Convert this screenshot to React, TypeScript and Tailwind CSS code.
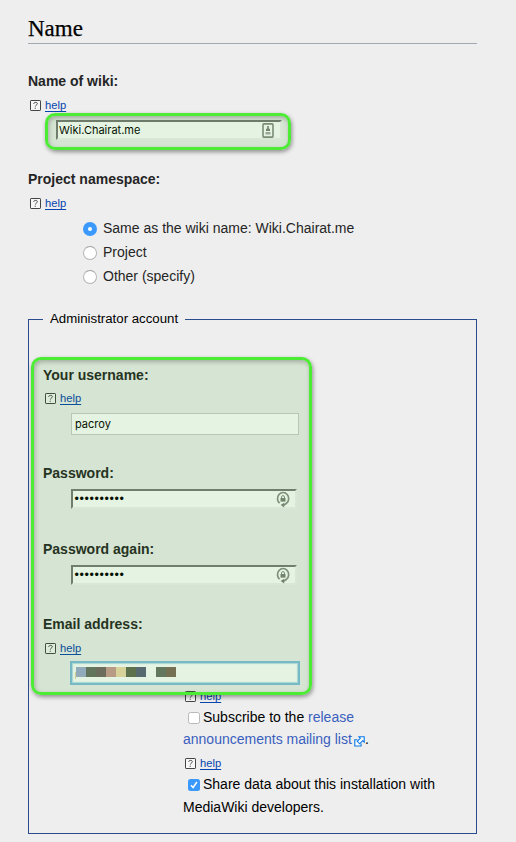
import type { ReactNode } from 'react';

function Help({ className }: { className: string }) {
  return (
    <div className={`flex h-4 items-center ${className}`}>
      <svg className="mr-[4px] shrink-0" width="11" height="11" viewBox="0 0 11 11" fill="none">
        <rect x="0.5" y="0.5" width="10" height="10" rx="0.6" fill="#f8f8f8" stroke="#444" />
        <path d="M3.7 3.9C3.8 2.7 4.8 2.4 5.7 2.4C6.8 2.4 7.5 3 7.3 3.9C7.1 5 5.6 5 5.4 6.5M5.2 7.7V8.8" stroke="#444" strokeWidth="1" />
      </svg>
      <a className="text-[11.2px] leading-4 text-[#0645ad] underline underline-offset-[2px]">help</a>
    </div>
  );
}

function Label({ children, className }: { children: ReactNode; className: string }) {
  return <div className={`h-5 text-[14px] font-bold leading-5 text-[#252525] ${className}`}>{children}</div>;
}

function Radio({ label, checked = false }: { label: string; checked?: boolean }) {
  return (
    <label className="flex h-6 items-center">
      <span
        className={`mr-[6px] mt-[2px] flex size-[14px] items-center justify-center rounded-full ${
          checked ? 'bg-[#3b99fc]' : 'border border-[#b5b5b5] border-t-[#a0a0a0] bg-white'
        }`}
      >
        {checked && <span className="size-1 rounded-full bg-white" />}
      </span>
      <span className="leading-6">{label}</span>
    </label>
  );
}

function KeyIcon() {
  return (
    <svg className="mr-[5px] shrink-0" width="14" height="17" viewBox="0 0 14 17" fill="none">
      <path d="M3.6 12.2A5.6 6 0 1 1 10.6 12.2L7.5 14.2" stroke="#8a8f88" strokeWidth="1.7" />
      <path d="M8.2 11.8L4.6 14.1L8.2 16.6Z" fill="#7c827a" />
      <rect x="4.5" y="7" width="5" height="3.6" fill="#7c827a" />
      <path d="M5.5 7V6C5.5 4.1 8.5 4.1 8.5 6V7" stroke="#8a8f88" />
    </svg>
  );
}

function Password() {
  return (
    <div className="ml-[42px] mt-1.5 flex h-[20px] w-[226px] items-center justify-between border-2 border-b-[#f2f2f2] border-l-[#7a7a7a] border-r-[#f2f2f2] border-t-[#7a7a7a] bg-white">
      <span className="pl-[1.5px] text-[12.5px] leading-4 tracking-[0.62px] text-black">••••••••••</span>
      <KeyIcon />
    </div>
  );
}

export default function App() {
  return (
    <div className="relative h-[842px] w-[516px] overflow-hidden bg-[#eee] pl-7 font-['Liberation_Sans',Arial,sans-serif] text-[14px] text-[#252525]">
      <h1 className="h-11 w-[449px] border-b border-[#a2a9b1] pt-[19px] font-['Liberation_Serif',serif] text-[23px] leading-5 text-black [-webkit-text-stroke:0.25px_black]">
        Name
      </h1>

      <Label className="mt-[27px]">Name of wiki:</Label>
      <Help className="ml-[2px] mt-1.5" />
      <div className="ml-7 mt-[7px] flex h-[20px] w-[226px] items-center justify-between border-2 border-b-[#f2f2f2] border-l-[#7a7a7a] border-r-[#f2f2f2] border-t-[#7a7a7a] bg-white">
        <span className="pl-[1px] font-['Inter',sans-serif] text-[11px] leading-4 text-black">Wiki.Chairat.me</span>
        <svg className="mr-[6px] shrink-0" width="12" height="15" viewBox="0 0 12 15">
          <rect x="1" y="0.9" width="10" height="13.2" rx="0.8" fill="white" stroke="#858b83" strokeWidth="1.6" />
          <path d="M5.2 3H6.8V5.4L8 6V8H4V6L5.2 5.4Z" fill="#7c827a" />
          <path d="M3.5 9H8.5V11.5H3.5Z" fill="#aaa" />
        </svg>
      </div>

      <Label className="mt-[29px]">Project namespace:</Label>
      <Help className="ml-[2px] mt-1.5" />
      <div className="ml-[55px] mt-[5px]">
        <Radio label="Same as the wiki name: Wiki.Chairat.me" checked />
        <Radio label="Project" />
        <Radio label="Other (specify)" />
      </div>

      <fieldset className="mt-[22px] h-[524px] w-[449px] border border-[#2a4b8d]">
        <legend className="ml-[14px] h-[19px] w-[142px] whitespace-nowrap pl-[7px] text-[13.25px] leading-[17px] text-black">Administrator account</legend>
        <Label className="ml-[14px] mt-9">Your username:</Label>
        <Help className="ml-4 mt-[5px]" />
        <div className="ml-[42px] mt-[7px] h-[22px] w-[228px] border border-[#ccc] bg-white pl-[3px] font-['Inter',sans-serif] text-[11px] leading-5 text-black">
          pacroy
        </div>
        <Label className="ml-[14px] mt-7">Password:</Label>
        <Password />
        <Label className="ml-[14px] mt-[30px]">Password again:</Label>
        <Password />
        <Label className="ml-[14px] mt-[29px]">Email address:</Label>
        <Help className="ml-4 mt-1.5" />
        <div className="ml-[41px] mt-[5px] flex h-6 w-[230px] border-2 border-[#83bde0] bg-white pl-[3px] pt-[4px] shadow-[inset_0_0_1px_1px_#b8dfed]">
          <span className="mt-[5px] h-[7px] w-px bg-[#ead8a0]" />
          <span className="h-[10px] w-[10px] bg-[#a0aed3]" />
          <span className="h-[10px] w-[10px] bg-[#6b7168]" />
          <span className="h-[10px] w-[10px] bg-[#776768]" />
          <span className="h-[10px] w-[10px] bg-[#cc9b95]" />
          <span className="h-[10px] w-[10px] bg-[#efdaae]" />
          <span className="h-[10px] w-[10px] bg-[#636c55]" />
          <span className="h-[10px] w-[10px] bg-[#5d647e]" />
          <span className="ml-[10px] h-[10px] w-[10px] bg-[#6b7169]" />
          <span className="h-[10px] w-[10px] bg-[#80695d]" />
        </div>

        <div className="ml-[154px]">
          <Help className="ml-[2px] mt-[3px]" />
          <div className="mt-[3px] flex h-[21px] items-center text-black">
            <span className="ml-[5px] mr-[3px] mt-[1px] size-3 rounded-[2.5px] border border-[#b8b8b8] bg-white" />
            <span>
              Subscribe to the <a className="text-[#3a5fbe]">release</a>
            </span>
          </div>
          <div className="mt-px flex h-[21px] items-center text-black">
            <a className="text-[#3a5fbe]">announcements mailing list</a>
            <svg className="ml-[2px] mt-[3px]" width="11" height="11" viewBox="0 0 11 11" fill="white" stroke="#0878e8" strokeWidth="1.1">
              <path d="M3.3 3.7H0.8V10H7.1V7.5" />
              <path d="M5 0.8H10.2V6L8.6 4.7L5.7 7.8L3.2 5.3L6.3 2.3Z" />
            </svg>
            <span>.</span>
          </div>
          <Help className="ml-[2px] mt-[5px]" />
          <div className="mt-[3px] flex h-[21px] items-center text-black">
            <span className="ml-[5px] mr-[3px] mt-[1px] flex size-3 items-center justify-center rounded-[2.5px] bg-[#3b99fc]">
              <svg width="10" height="10" viewBox="0 0 10 10" fill="none" stroke="white" strokeWidth="1.5">
                <path d="M2 5.2L4.1 7.5L7.9 2" />
              </svg>
            </span>
            <span>Share data about this installation with</span>
          </div>
          <div className="mt-[2px] h-[21px] leading-[21px] text-black">MediaWiki developers.</div>
        </div>
      </fieldset>

      <div className="absolute left-[45px] top-[113px] h-[36.5px] w-[245.5px] rounded-[10px] border-3 border-[#4bec33] bg-[#269b0d]/12 bg-clip-padding shadow-[1px_2px_4px_rgba(0,0,0,0.4),inset_1px_2px_4px_rgba(0,0,0,0.25)]" />
      <div className="absolute left-[30.5px] top-[357px] h-[338px] w-[281px] rounded-[10px] border-3 border-[#4bec33] bg-[#269b0d]/12 bg-clip-padding shadow-[1px_2px_4px_rgba(0,0,0,0.4),inset_1px_2px_4px_rgba(0,0,0,0.25)]" />
    </div>
  );
}
